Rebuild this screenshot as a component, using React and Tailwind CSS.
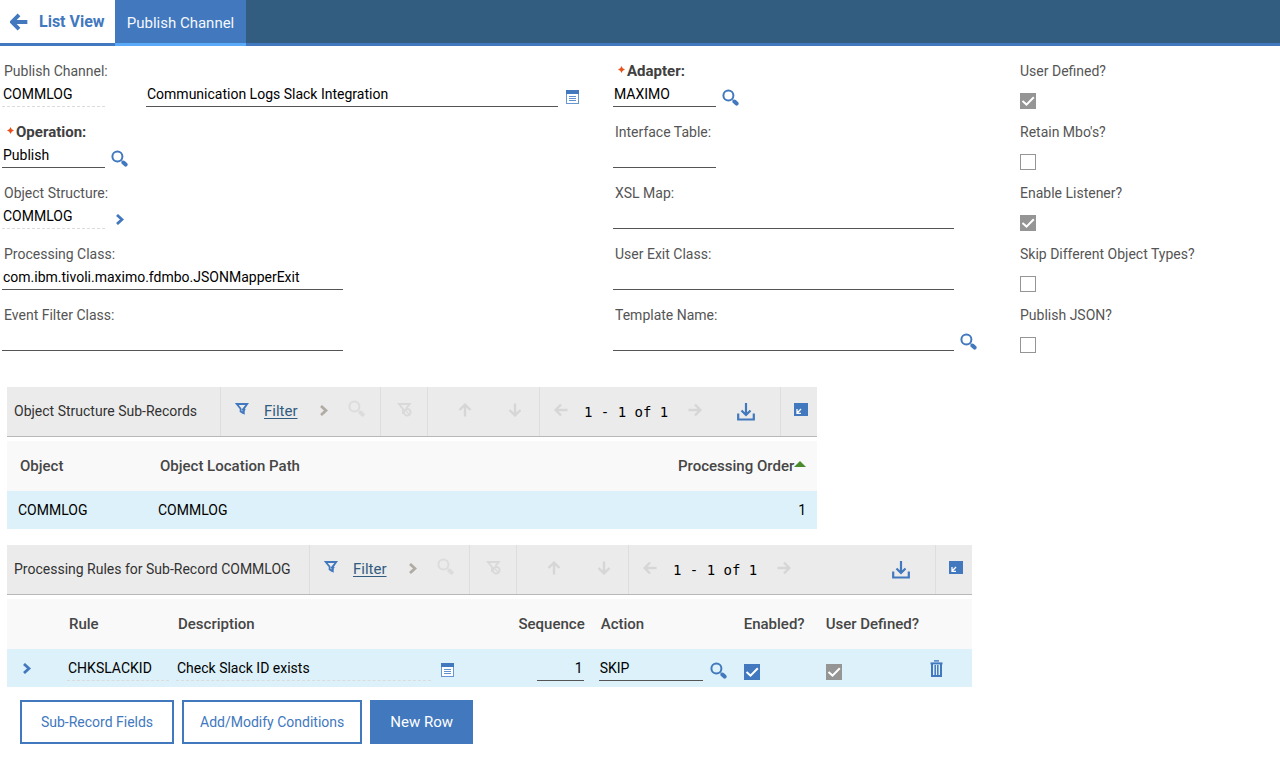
import { clsx } from 'clsx';

const SearchIcon = ({ className = 'text-[#4178be]' }) => (
  <svg viewBox="0 0 17 17" className={clsx('size-[17px] shrink-0', className)} fill="none" stroke="currentColor">
    <circle cx="6.4" cy="6.4" r="5" strokeWidth="2" />
    <path d="M10.6 10.6l1 1" strokeWidth="1.2" />
    <path d="M12.4 12.6l2.2 2" strokeWidth="4" strokeLinecap="round" />
  </svg>
);

const MemoIcon = () => (
  <svg viewBox="0 0 13 14" className="h-[14px] w-[13px] shrink-0">
    <rect x="0.5" y="0.5" width="12" height="13" fill="#fff" stroke="#6796d2" />
    <rect width="13" height="4" fill="#4178be" />
    <path d="M3 6.5h7M3 8.5h7M3 10.5h7" stroke="#5f90cf" strokeWidth="1.2" />
  </svg>
);

const Chevron = ({ className }) => (
  <svg viewBox="0 0 8 11" className={clsx('h-[11px] w-[8px] shrink-0', className)} fill="none" stroke="currentColor" strokeWidth="2.8">
    <path d="M1 1l5 4.5L1 10" />
  </svg>
);

const FunnelIcon = () => (
  <svg viewBox="0 0 14 14" className="size-[14px]">
    <path d="M1.8 2h10.4L8.8 6.6v4.6L5.6 9.4V6.8z" fill="none" stroke="#4178be" strokeWidth="1.8" />
    <path d="M10.8 3.5L6.5 7.5l1.2 1.2-1 3.8 4-5.2-1.2-.8z" fill="#4178be" />
  </svg>
);

const ClearFilterIcon = () => (
  <svg viewBox="0 0 15 15" className="size-[15px]" fill="none" stroke="#d9d9d9" strokeWidth="1.8">
    <path d="M6 12V7L1.8 2h11L9.5 6" />
    <circle cx="10.3" cy="10.3" r="3.3" />
    <path d="M8 8l4.6 4.6" strokeWidth="1.3" />
  </svg>
);

const Arrow = ({ className, width = 2.4 }) => (
  <svg viewBox="0 0 14 14" className={clsx('shrink-0', className)} fill="none" stroke="currentColor" strokeWidth={width}>
    <path d="M13.5 7H2M7 1.5L1.6 7 7 12.5" />
  </svg>
);

const DownloadIcon = () => (
  <svg viewBox="0 0 18 18" className="size-[18px]" fill="none" stroke="#4178be" strokeWidth="2.2">
    <path d="M9 0v12M4.5 7.5L9 12l4.5-4.5" />
    <path d="M1.2 10.5v6h15.6v-6" />
  </svg>
);

const CollapseIcon = () => (
  <svg viewBox="0 0 14 13" className="h-[13px] w-[14px]">
    <rect width="14" height="13" fill="#4178be" />
    <path d="M7 6L3.4 9.8M3 6v4.3h4" fill="none" stroke="#fff" strokeWidth="1.3" />
  </svg>
);

const TrashIcon = () => (
  <svg viewBox="0 0 13 17" className="h-[17px] w-[13px]" fill="none" stroke="#4178be">
    <path d="M4 .9h5" strokeWidth="1.4" />
    <path d="M0.5 3.4h12" strokeWidth="2" />
    <path d="M2 4v12h9V4" strokeWidth="2" />
    <path d="M5.2 5v10M7.8 5v10" strokeWidth="1.5" />
  </svg>
);

const Line = ({ className, dashed, ...props }) => (
  <input
    type="text"
    readOnly={dashed}
    className={clsx(
      'h-[26px] border-b px-px text-[14px] text-black outline-none',
      dashed ? 'border-dashed border-[#dcdcdc]' : 'border-[#555]',
      className
    )}
    {...props}
  />
);

const IconButton = ({ label, children, className, ...props }) => (
  <button type="button" aria-label={label} className={clsx('flex shrink-0 items-center', className)} {...props}>
    {children}
  </button>
);

const Field = ({ id, label, required, children }) => (
  <div className="h-[61px]">
    <label
      htmlFor={id}
      className={clsx(
        'flex h-5 items-center',
        required ? 'gap-[2px] pl-[5px] text-[15px] font-bold text-[#404040]' : 'pl-[2px]'
      )}
    >
      {required && (
        <svg viewBox="0 0 7 7" className="mb-1 size-[7px]" fill="#e8501c">
          <path d="M3.5 0l1.2 2.3L7 3.5 4.7 4.7 3.5 7 2.3 4.7 0 3.5l2.3-1.2z" />
        </svg>
      )}
      {label}
    </label>
    <div className="flex">{children}</div>
  </div>
);

const Check = ({ id, checked, disabled, ...props }) => (
  <span className="inline-grid size-4 shrink-0">
    <input
      id={id}
      type="checkbox"
      defaultChecked={checked}
      disabled={disabled}
      className="col-start-1 row-start-1 size-4 appearance-none border border-[#959595] bg-white checked:border-[#4178be] checked:bg-[#4178be] disabled:checked:border-[#959595] disabled:checked:bg-[#959595]"
      {...props}
    />
    {checked && (
      <svg viewBox="0 0 16 16" className="pointer-events-none col-start-1 row-start-1 size-4" fill="none" stroke="#fff" strokeWidth="2">
        <path d="M2.5 8l4 3.6L13.8 4.2" />
      </svg>
    )}
  </span>
);

const flags = [
  { id: 'userDefined', label: 'User Defined?', checked: true, disabled: true },
  { id: 'retainMbos', label: "Retain Mbo's?" },
  { id: 'enableListener', label: 'Enable Listener?', checked: true, disabled: true },
  { id: 'skipTypes', label: 'Skip Different Object Types?' },
  { id: 'publishJson', label: 'Publish JSON?' },
];

const Toolbar = ({ title, titleWidth }) => (
  <div className="flex h-[50px] border-b border-[#b8b8b8] bg-[#ebebeb] text-[#323232]">
    <h2 className={clsx('flex shrink-0 items-center pb-0.5 pl-[7px]', titleWidth)}>{title}</h2>
    <div className="flex w-[160px] shrink-0 items-center border-l border-[#dedede] pb-0.5 pl-[14px]">
      <IconButton label="Filter rows" className="mb-1"><FunnelIcon /></IconButton>
      <a href="#filter" className="ml-[15px] w-[34px] text-[15px] text-[#325c80] underline underline-offset-2">Filter</a>
      <Chevron className="ml-[22px] text-[#b0aca4]" />
      <IconButton label="Find" disabled className="mb-1 ml-5">
        <SearchIcon className="size-[15px] text-[#dcdcdc]" />
      </IconButton>
    </div>
    <div className="flex w-[47px] shrink-0 items-center justify-center border-l border-[#dedede]">
      <IconButton label="Clear filter" disabled className="mb-1"><ClearFilterIcon /></IconButton>
    </div>
    <div className="flex w-[112px] shrink-0 items-center gap-9 border-l border-[#dedede] pb-1 pl-[30px] text-[#d6d6d6]">
      <IconButton label="Previous row" disabled><Arrow className="size-[14px] rotate-90" /></IconButton>
      <IconButton label="Next row" disabled><Arrow className="size-[14px] -rotate-90" /></IconButton>
    </div>
    <div className="flex flex-1 items-center border-l border-[#dedede] pr-[25px] pl-[14px] text-[#d6d6d6]">
      <IconButton label="Previous page" disabled className="mb-1"><Arrow className="size-[14px]" /></IconButton>
      <span className="ml-4 font-['DejaVu_Sans_Mono',monospace] text-[14px] whitespace-nowrap text-black">1 - 1 of 1</span>
      <IconButton label="Next page" disabled className="mb-1 ml-5"><Arrow className="size-[14px] rotate-180" /></IconButton>
      <IconButton label="Download" className="ml-auto"><DownloadIcon /></IconButton>
    </div>
    <div className="flex w-[37px] shrink-0 items-center justify-center border-l border-[#dedede] pb-1 pl-1">
      <IconButton label="Collapse table"><CollapseIcon /></IconButton>
    </div>
  </div>
);

const OutlineButton = ({ children }) => (
  <button type="button" className="h-11 min-w-[154px] border-2 border-[#4178be] bg-white px-4 text-[#4178be]">
    {children}
  </button>
);

const App = () => (
  <div className="min-h-screen bg-white font-[Roboto,sans-serif] text-[14px] leading-5 text-[#555]">
    <header className="flex h-[46px] border-b-[3px] border-[#4178be] bg-[#325c80]">
      <a href="#list" className="flex w-[115px] items-center bg-white pl-[10px] text-[16px] font-bold text-[#4178be]">
        <Arrow className="mr-[11px] size-[18px]" width={3} />
        List View
      </a>
      <a href="#channel" className="-mb-[3px] flex w-[131px] items-center justify-center border-b-[3px] border-[#5aaafa] bg-[#4178be] pt-0.5 text-[15px] text-[#f4f7fb]">
        Publish Channel
      </a>
    </header>

    <main>
      <form className="grid grid-cols-[613fr_407fr_260fr] pt-[15px]">
        <div className="pl-[2px]">
          <Field id="channel" label="Publish Channel:">
            <Line id="channel" dashed className="w-[103px]" defaultValue="COMMLOG" />
            <Line aria-label="Publish channel description" className="mr-[8px] ml-[41px] w-[412px]" defaultValue="Communication Logs Slack Integration" />
            <IconButton label="Long description" className="pt-1.5"><MemoIcon /></IconButton>
          </Field>
          <Field id="operation" label="Operation:" required>
            <Line id="operation" className="mr-[6px] w-[103px]" defaultValue="Publish" />
            <IconButton label="Select operation" className="pt-1.5"><SearchIcon /></IconButton>
          </Field>
          <Field id="structure" label="Object Structure:">
            <Line id="structure" dashed className="mr-[11px] w-[103px]" defaultValue="COMMLOG" />
            <IconButton label="Object structure menu" className="pt-1.5">
              <Chevron className="text-[#4178be]" />
            </IconButton>
          </Field>
          <Field id="processing" label="Processing Class:">
            <Line id="processing" className="w-[341px]" defaultValue="com.ibm.tivoli.maximo.fdmbo.JSONMapperExit" />
          </Field>
          <Field id="eventFilter" label="Event Filter Class:">
            <Line id="eventFilter" className="w-[341px]" />
          </Field>
        </div>

        <div>
          <Field id="adapter" label="Adapter:" required>
            <Line id="adapter" className="mr-[6px] w-[103px]" defaultValue="MAXIMO" />
            <IconButton label="Select adapter" className="pt-1.5"><SearchIcon /></IconButton>
          </Field>
          <Field id="interface" label="Interface Table:">
            <Line id="interface" className="w-[103px]" />
          </Field>
          <Field id="xsl" label="XSL Map:">
            <Line id="xsl" className="w-[341px]" />
          </Field>
          <Field id="userExit" label="User Exit Class:">
            <Line id="userExit" className="w-[341px]" />
          </Field>
          <Field id="template" label="Template Name:">
            <Line id="template" className="mr-[6px] w-[341px]" />
            <IconButton label="Select template" className="pt-1.5"><SearchIcon /></IconButton>
          </Field>
        </div>

        <div>
          {flags.map(({ id, label, ...rest }) => (
            <div key={id} className="flex h-[61px] flex-col gap-3">
              <label htmlFor={id}>{label}</label>
              <Check id={id} {...rest} />
            </div>
          ))}
        </div>
      </form>

      <div className="px-[7px] pt-[21px]">
        <section className="w-[64%] min-w-[760px]">
          <Toolbar title="Object Structure Sub-Records" titleWidth="w-[213px]" />
          <table className="mt-1 w-full table-fixed text-left">
            <thead className="bg-[#f9f9f9] text-[15px] text-[#464646]">
              <tr className="h-[50px]">
                <th className="w-[140px] pl-[13px] font-medium">Object</th>
                <th className="pl-[13px] font-medium">Object Location Path</th>
                <th className="w-[180px] pr-[11px] font-medium">
                  <span className="flex items-center justify-end">
                    Processing Order
                    <svg viewBox="0 0 12 6" className="mb-1 h-[6px] w-[12px]" fill="#4b8b2b">
                      <path d="M6 0l6 6H0z" />
                    </svg>
                  </span>
                </th>
              </tr>
            </thead>
            <tbody className="bg-[#dcf1f9] text-black">
              <tr className="h-[38px]">
                <td className="pl-[11px]">COMMLOG</td>
                <td className="pl-[11px]">COMMLOG</td>
                <td className="pr-[11px] text-right">1</td>
              </tr>
            </tbody>
          </table>
        </section>

        <section className="mt-4 w-[76.2%] min-w-[940px]">
          <Toolbar title="Processing Rules for Sub-Record COMMLOG" titleWidth="w-[302px]" />
          <table className="mt-1 w-full table-fixed text-left">
            <thead className="bg-[#f9f9f9] text-[15px] text-[#464646]">
              <tr className="h-[50px]">
                <th className="w-[59px]" aria-label="Details" />
                <th className="w-[110px] pl-[3px] font-medium">Rule</th>
                <th className="pl-[2px] font-medium">Description</th>
                <th className="w-[76px] pr-[6px] text-right font-medium">Sequence</th>
                <th className="w-[145px] pl-[10px] font-medium">Action</th>
                <th className="w-[82px] pl-[8px] font-medium">Enabled?</th>
                <th className="w-[104px] pl-[8px] font-medium">User Defined?</th>
                <th className="w-[50px]" aria-label="Delete" />
              </tr>
            </thead>
            <tbody className="bg-[#dcf1f9]">
              <tr className="h-[38px]">
                <td className="pl-4">
                  <IconButton label="View details"><Chevron className="text-[#4178be]" /></IconButton>
                </td>
                <td className="pl-px">
                  <Line aria-label="Rule" dashed className="w-[102px]" defaultValue="CHKSLACKID" />
                </td>
                <td>
                  <div className="flex items-center">
                    <Line aria-label="Description" dashed className="mr-[10px] w-[255px]" defaultValue="Check Slack ID exists" />
                    <IconButton label="Rule long description" className="pt-1"><MemoIcon /></IconButton>
                  </div>
                </td>
                <td className="pr-[7px] text-right">
                  <Line aria-label="Sequence" className="w-[47px] text-right" defaultValue="1" />
                </td>
                <td className="pl-[8px]">
                  <div className="flex items-center">
                    <Line aria-label="Action" className="mr-[7px] w-[104px]" defaultValue="SKIP" />
                    <IconButton label="Select action" className="pt-1"><SearchIcon /></IconButton>
                  </div>
                </td>
                <td className="pl-[8px]">
                  <div className="flex pt-2"><Check aria-label="Enabled" checked /></div>
                </td>
                <td className="pl-[8px]">
                  <div className="flex pt-2"><Check aria-label="User defined" checked disabled /></div>
                </td>
                <td className="pl-2">
                  <IconButton label="Delete row"><TrashIcon /></IconButton>
                </td>
              </tr>
            </tbody>
          </table>
        </section>

        <div className="mt-[13px] ml-[13px] flex gap-2">
          <OutlineButton>Sub-Record Fields</OutlineButton>
          <OutlineButton>Add/Modify Conditions</OutlineButton>
          <button type="button" className="h-11 bg-[#4178be] px-5 text-[15px] text-white">New Row</button>
        </div>
      </div>
    </main>
  </div>
);

export default App;
